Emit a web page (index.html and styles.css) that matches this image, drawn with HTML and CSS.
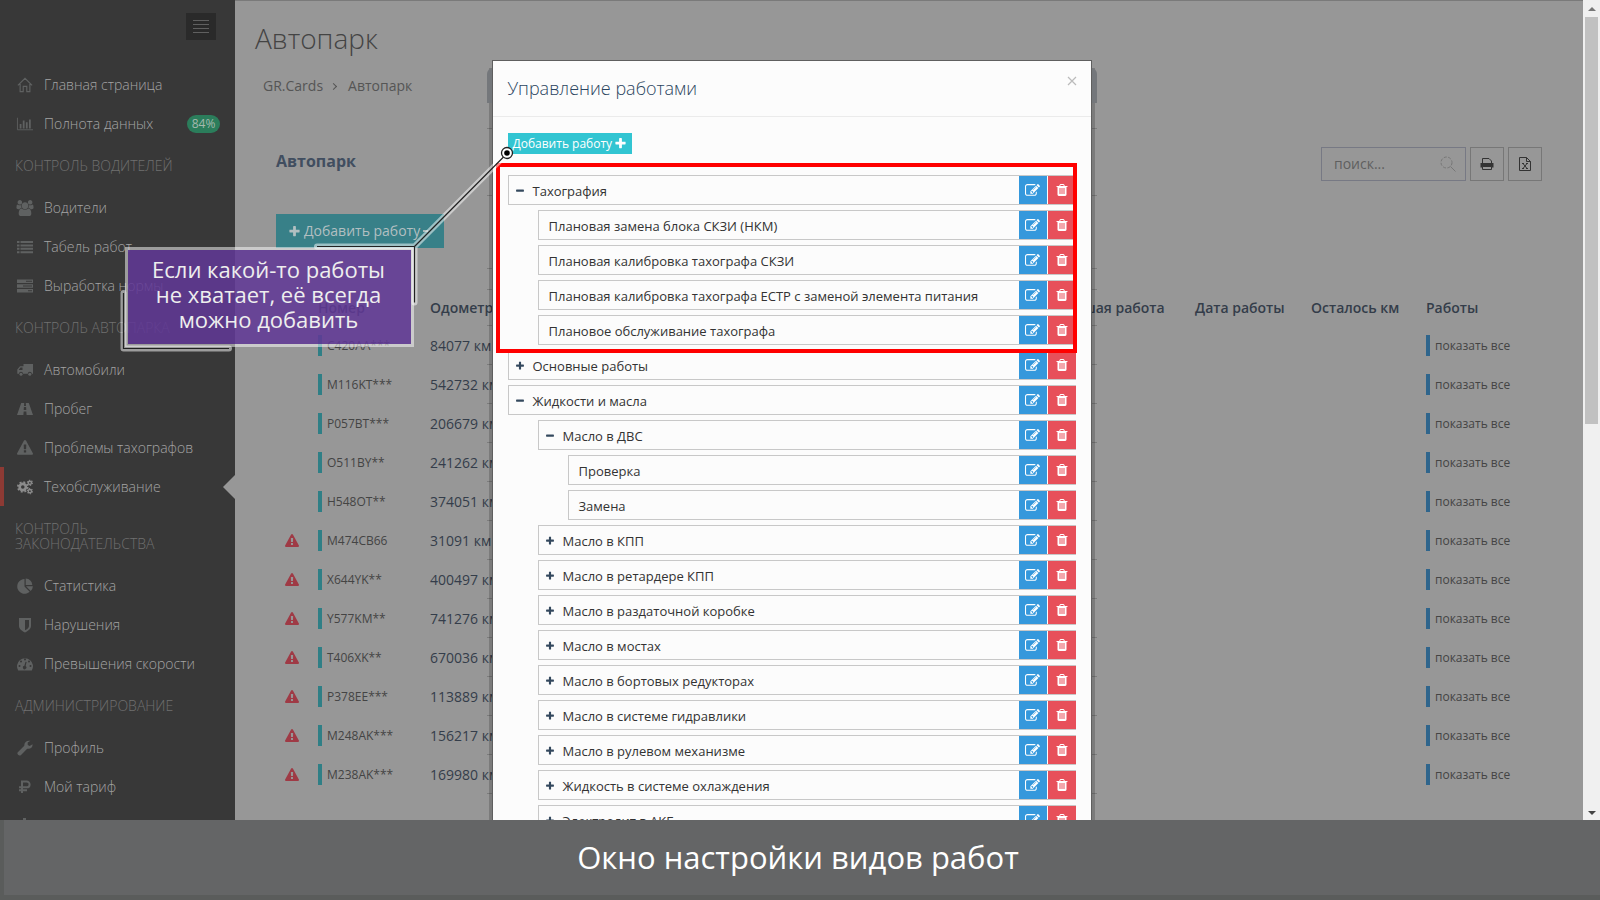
FILE: index.html
```html
<!DOCTYPE html>
<html lang="ru">
<head>
<meta charset="utf-8">
<title>Автопарк</title>
<link rel="stylesheet" href="styles.css">
</head>
<body>
<svg class="sprite" aria-hidden="true">
  <symbol id="i-home" viewBox="0 0 18 18"><path d="M1 9.500 9 1.500l8 8M3.500 8v8.500H7V10.500h4v6h3.500V8" fill="none" stroke="currentColor" stroke-width="1.300"/></symbol>
  <symbol id="i-chart" viewBox="0 0 18 18"><path d="M.5 2v13.500H18" fill="none" stroke="currentColor"/><path d="M3 9h2v5H3zM6.500 5h2v9h-2zM10 7h2v7h-2zM13.500 4h2v10h-2z" fill="currentColor"/></symbol>
  <symbol id="i-users" viewBox="0 0 1920 1792"><path fill="currentColor" d="M593 896q-162 5-265 128H194q-82 0-138-40.500T0 865q0-353 124-353 6 0 43.500 21t97.500 42.500T384 597q67 0 133-23-5 37-5 66 0 139 81 256zm1071 637q0 120-73 189.500t-194 69.500H523q-121 0-194-69.500T256 1533q0-53 3.500-103.500t14-109T300 1212t43-97.500 62-81 85.500-53.500T602 960q10 0 43 21.500t73 48 107 48 135 21.500 135-21.500 107-48 73-48 43-21.500q61 0 111.500 20t85.500 53.500 62 81 43 97.500 26.500 108.500 14 109 3.500 103.500zM640 256q0 106-75 181t-181 75-181-75-75-181 75-181T384 0t181 75 75 181zm704 384q0 159-112.500 271.500T960 1024 688.500 911.500 576 640t112.500-271.500T960 256t271.500 112.500T1344 640zm576 225q0 78-56 118.500t-138 40.500h-134q-103-123-265-128 81-117 81-256 0-29-5-66 66 23 133 23 59 0 119-21.500t97.500-42.500 43.500-21q124 0 124 353zm-128-609q0 106-75 181t-181 75-181-75-75-181 75-181 181-75 181 75 75 181z"/></symbol>
  <symbol id="i-list" viewBox="0 0 16 16"><path fill="currentColor" d="M0 2h2.500v2H0zM3.500 2H16v2H3.500zM0 5.400h2.500v2H0zM3.500 5.400H16v2H3.500zM0 8.800h2.500v2H0zM3.500 8.800H16v2H3.500zM0 12.200h2.500v2H0zM3.500 12.200H16v2H3.500z"/></symbol>
  <symbol id="i-tasks" viewBox="0 0 16 16"><path fill="currentColor" fill-rule="evenodd" d="M0 1.500h16V5H0zM9 2.700v1h6v-1zM0 6.300h16v3.500H0zM6 7.500v1h9v-1zM0 11.100h16v3.500H0zM11 12.300v1h4v-1z"/></symbol>
  <symbol id="i-truck" viewBox="0 0 16 16"><path fill="currentColor" fill-rule="evenodd" d="M6.500 2H16v9.700h-1.200a2 2 0 0 0-4 0H6a2 2 0 0 0-4 0H.3V7.500L3 4.200h3.500zM5.500 5.500h-2L1.600 8h3.900z"/><circle cx="4" cy="12.200" r="1.500" fill="currentColor"/><circle cx="12.800" cy="12.200" r="1.500" fill="currentColor"/></symbol>
  <symbol id="i-road" viewBox="0 0 16 16"><path fill="currentColor" fill-rule="evenodd" d="M4.200 2h3L7 5h2l-.2-3h3L16 14H9.600l-.3-3.500H6.700L6.400 14H0zM6.900 6l-.2 3h2.600l-.2-3z"/></symbol>
  <symbol id="i-warn" viewBox="0 0 1792 1792"><path fill="currentColor" d="M1024 1375v-190q0-14-9.500-23.500T992 1152H800q-13 0-22.500 9.500T768 1185v190q0 14 9.500 23.500T800 1408h192q13 0 22.500-9.500T1024 1375zm-2-374l18-459q0-12-10-19-13-11-24-11H786q-11 0-24 11-10 7-10 21l17 457q0 10 10 16.500t24 6.500h185q14 0 23.500-6.500T1022 1001zm-14-934l768 1408q35 63-2 126-17 29-46.500 46t-63.500 17H128q-34 0-63.500-17T18 1601q-37-63-2-126L784 67q17-31 47-49t65-18 65 18 47 49z"/></symbol>
  <symbol id="i-cogs" viewBox="0 0 18 18"><g fill="none" stroke="currentColor"><circle cx="6.500" cy="9" r="3.500" stroke-width="3"/><circle cx="6.500" cy="9" r="5.500" stroke-width="2" stroke-dasharray="2.160 2.160"/><circle cx="14.500" cy="4.300" r="1.800" stroke-width="1.600"/><circle cx="14.500" cy="4.300" r="2.900" stroke-width="1.200" stroke-dasharray="1.500 1.540"/><circle cx="14.500" cy="13.700" r="1.800" stroke-width="1.600"/><circle cx="14.500" cy="13.700" r="2.900" stroke-width="1.200" stroke-dasharray="1.500 1.540"/></g></symbol>
  <symbol id="i-pie" viewBox="0 0 16 16"><path fill="currentColor" d="M7.500 1v7.500l5.200 5.300A7.400 7.400 0 1 1 7.500 1zM8.700.5A7.300 7.300 0 0 1 15.300 7H8.700zM9 8.200h6.900a7 7 0 0 1-2.200 4.800z"/></symbol>
  <symbol id="i-shield" viewBox="0 0 16 16"><path fill="currentColor" fill-rule="evenodd" d="M2 1h12v8c0 3-3 5-6 6.500C5 14 2 12 2 9zM8 3v10.300c2-1 4-2.500 4-4.300V3z"/></symbol>
  <symbol id="i-tach" viewBox="0 0 16 16"><path fill="currentColor" fill-rule="evenodd" d="M1.200 14.500A8 8 0 1 1 14.800 14.500zM7 3.500a1 1 0 1 0 2 0 1 1 0 1 0-2 0M3 5.500a1 1 0 1 0 2 0 1 1 0 1 0-2 0M11 5.500a1 1 0 1 0 2 0 1 1 0 1 0-2 0M1.500 10a1 1 0 1 0 2 0 1 1 0 1 0-2 0M12.500 10a1 1 0 1 0 2 0 1 1 0 1 0-2 0M8.500 5.800l-1.100 4a1.700 1.700 0 1 0 1.200.3l1-4z"/></symbol>
  <symbol id="i-wrench" viewBox="0 0 16 16"><path fill="currentColor" d="M15.500 4.200 12.700 6l-2-1V2.500l2.700-1.700C10 0 7 2 7.300 5.700L.8 12.200c-1.500 1.700 1.200 4.400 3 3l6.400-6.500c3.300.7 5.800-1.500 5.300-4.500z"/></symbol>
  <symbol id="i-rub" viewBox="0 0 16 16"><path fill="none" stroke="currentColor" stroke-width="2" d="M5 14V2.500h4.700a2.900 2.900 0 0 1 0 5.800H2M2 11.300h8"/></symbol>
  <symbol id="i-user" viewBox="0 0 16 16"><path fill="currentColor" d="M6 0h3v11H6z"/></symbol>
  <symbol id="i-plus" viewBox="0 0 1792 1792"><path fill="currentColor" d="M1600 736v192q0 40-28 68t-68 28h-416v416q0 40-28 68t-68 28H800q-40 0-68-28t-28-68v-416H288q-40 0-68-28t-28-68V736q0-40 28-68t68-28h416V224q0-40 28-68t68-28h192q40 0 68 28t28 68v416h416q40 0 68 28t28 68z"/></symbol>
  <symbol id="i-minus" viewBox="0 0 1792 1792"><path fill="currentColor" d="M1600 736v192q0 40-28 68t-68 28H288q-40 0-68-28t-28-68V736q0-40 28-68t68-28h1216q40 0 68 28t28 68z"/></symbol>
  <symbol id="i-edit" viewBox="0 0 1792 1792"><path fill="currentColor" d="M888 1184l116-116-152-152-116 116v56h96v96h56zm440-720q-16-16-33 1L945 815q-17 17-1 33t33-1l350-350q17-17 1-33zm80 594v190q0 119-84.500 203.500T1120 1536H288q-119 0-203.500-84.500T0 1248V416q0-119 84.500-203.500T288 128h832q63 0 117 25 15 7 18 23 3 17-9 29l-49 49q-14 14-32 8-23-6-45-6H288q-66 0-113 47t-47 113v832q0 66 47 113t113 47h832q66 0 113-47t47-113v-126q0-13 9-22l64-64q15-15 35-7t20 29zm-96-738l288 288-672 672H640V992zm444 132l-92 92-288-288 92-92q28-28 68-28t68 28l152 152q28 28 28 68t-28 68z"/></symbol>
  <symbol id="i-trash" viewBox="0 0 1792 1792"><path fill="currentColor" d="M704 1376V672q0-14-9-23t-23-9h-64q-14 0-23 9t-9 23v704q0 14 9 23t23 9h64q14 0 23-9t9-23zm256 0V672q0-14-9-23t-23-9h-64q-14 0-23 9t-9 23v704q0 14 9 23t23 9h64q14 0 23-9t9-23zm256 0V672q0-14-9-23t-23-9h-64q-14 0-23 9t-9 23v704q0 14 9 23t23 9h64q14 0 23-9t9-23zM672 384h448l-48-117q-7-9-17-11H738q-10 2-17 11zm928 32v64q0 14-9 23t-23 9h-96v948q0 83-47 143.500t-113 60.500H480q-66 0-113-58.500T320 1464V512h-96q-14 0-23-9t-9-23v-64q0-14 9-23t23-9h309l70-167q15-37 54-63t79-26h320q40 0 79 26t54 63l70 167h309q14 0 23 9t9 23z"/></symbol>
  <symbol id="i-print" viewBox="0 0 14 14"><path fill="currentColor" d="M.5 6h13v4.500h-13z"/><path fill="none" stroke="currentColor" d="M2.500 6.500v-5h6.500l2.500 2.500v2.500"/><path fill="#979797" stroke="currentColor" d="M2.500 9.500h9v3h-9z"/></symbol>
  <symbol id="i-excel" viewBox="0 0 14 16"><path fill="none" stroke="currentColor" d="M1.500 1.500h7l4 4v9h-11zM8.500 1.500v4h4M5 7.500l4 5M9 7.500l-4 5M4 7.500h2M8 7.500h2M4 12.500h2M8 12.500h2"/></symbol>
  <symbol id="i-search" viewBox="0 0 18 18"><circle cx="7.500" cy="7.500" r="5.500" fill="none" stroke="currentColor" stroke-dasharray="3 1.500"/><path d="m11.500 11.500 5 5" stroke="currentColor"/></symbol>
</svg>

<div class="stage">
  <nav class="sidebar">
    <div class="sidebar-top"><button class="toggler" type="button" aria-label="Меню"><span></span><span></span><span></span><span></span></button></div>
    <a class="item" href="#"><svg><use href="#i-home"/></svg>Главная страница</a>
    <a class="item" href="#"><svg><use href="#i-chart"/></svg>Полнота данных<span class="badge">84%</span></a>
    <h3>КОНТРОЛЬ ВОДИТЕЛЕЙ</h3>
    <a class="item" href="#"><svg><use href="#i-users"/></svg>Водители</a>
    <a class="item" href="#"><svg><use href="#i-list"/></svg>Табель работ</a>
    <a class="item" href="#"><svg><use href="#i-tasks"/></svg>Выработка нормы</a>
    <h3>КОНТРОЛЬ АВТОПАРКА</h3>
    <a class="item" href="#"><svg><use href="#i-truck"/></svg>Автомобили</a>
    <a class="item" href="#"><svg><use href="#i-road"/></svg>Пробег</a>
    <a class="item" href="#"><svg><use href="#i-warn"/></svg>Проблемы тахографов</a>
    <a class="item active" href="#"><svg><use href="#i-cogs"/></svg>Техобслуживание</a>
    <h3>КОНТРОЛЬ ЗАКОНОДАТЕЛЬСТВА</h3>
    <a class="item" href="#"><svg><use href="#i-pie"/></svg>Статистика</a>
    <a class="item" href="#"><svg><use href="#i-shield"/></svg>Нарушения</a>
    <a class="item" href="#"><svg><use href="#i-tach"/></svg>Превышения скорости</a>
    <h3>АДМИНИСТРИРОВАНИЕ</h3>
    <a class="item" href="#"><svg><use href="#i-wrench"/></svg>Профиль</a>
    <a class="item" href="#"><svg><use href="#i-rub"/></svg>Мой тариф</a>
    <a class="item" href="#" aria-label="Пользователи"><svg><use href="#i-user"/></svg></a>
  </nav>

  <main class="page">
    <h1>Автопарк</h1>
    <div class="crumbs"><a href="#">GR.Cards</a><span class="sep"></span><a href="#">Автопарк</a></div>
    <section class="panel">
      <div class="panel-head">
        <h2>Автопарк</h2>
        <div class="tools">
          <label class="search"><input type="text" placeholder="поиск..." aria-label="Поиск"><svg><use href="#i-search"/></svg></label>
          <button type="button" class="tool" aria-label="Печать"><svg><use href="#i-print"/></svg></button>
          <button type="button" class="tool" aria-label="Excel"><svg><use href="#i-excel"/></svg></button>
        </div>
      </div>
      <button type="button" class="add-main"><svg><use href="#i-plus"/></svg>Добавить работу<i class="caret"></i></button>
      <table class="fleet">
        <colgroup><col class="c-warn"><col class="c-num"><col class="c-odo"><col><col class="c-next"><col class="c-date"><col class="c-left"><col class="c-works"></colgroup>
        <thead><tr><th></th><th>Номер</th><th>Одометр</th><th></th><th>Ближайшая работа</th><th>Дата работы</th><th>Осталось км</th><th>Работы</th></tr></thead>
        <tbody>
          <tr><td></td><td><a class="plate" href="#">C420AA***</a></td><td>84077 км</td><td colspan="4"></td><td><a class="plate blue" href="#">показать все</a></td></tr>
          <tr><td></td><td><a class="plate" href="#">M116KT***</a></td><td>542732 км</td><td colspan="4"></td><td><a class="plate blue" href="#">показать все</a></td></tr>
          <tr><td></td><td><a class="plate" href="#">P057BT***</a></td><td>206679 км</td><td colspan="4"></td><td><a class="plate blue" href="#">показать все</a></td></tr>
          <tr><td></td><td><a class="plate" href="#">O511BY**</a></td><td>241262 км</td><td colspan="4"></td><td><a class="plate blue" href="#">показать все</a></td></tr>
          <tr><td></td><td><a class="plate" href="#">H548OT**</a></td><td>374051 км</td><td colspan="4"></td><td><a class="plate blue" href="#">показать все</a></td></tr>
          <tr><td><svg><use href="#i-warn"/></svg></td><td><a class="plate" href="#">M474CB66</a></td><td>31091 км</td><td colspan="4"></td><td><a class="plate blue" href="#">показать все</a></td></tr>
          <tr><td><svg><use href="#i-warn"/></svg></td><td><a class="plate" href="#">X644YK**</a></td><td>400497 км</td><td colspan="4"></td><td><a class="plate blue" href="#">показать все</a></td></tr>
          <tr><td><svg><use href="#i-warn"/></svg></td><td><a class="plate" href="#">Y577KM**</a></td><td>741276 км</td><td colspan="4"></td><td><a class="plate blue" href="#">показать все</a></td></tr>
          <tr><td><svg><use href="#i-warn"/></svg></td><td><a class="plate" href="#">T406XK**</a></td><td>670036 км</td><td colspan="4"></td><td><a class="plate blue" href="#">показать все</a></td></tr>
          <tr><td><svg><use href="#i-warn"/></svg></td><td><a class="plate" href="#">P378EE***</a></td><td>113889 км</td><td colspan="4"></td><td><a class="plate blue" href="#">показать все</a></td></tr>
          <tr><td><svg><use href="#i-warn"/></svg></td><td><a class="plate" href="#">M248AK***</a></td><td>156217 км</td><td colspan="4"></td><td><a class="plate blue" href="#">показать все</a></td></tr>
          <tr><td><svg><use href="#i-warn"/></svg></td><td><a class="plate" href="#">M238AK***</a></td><td>169980 км</td><td colspan="4"></td><td><a class="plate blue" href="#">показать все</a></td></tr>
        </tbody>
      </table>
    </section>
  </main>

  <div class="scrollbar"><i class="up"></i><div class="thumb"></div><i class="down"></i></div>

  <div class="overlay">
    <div class="modal-wrap">
      <div class="ticks"></div>
      <div class="shoulder"></div>
      <div class="modal" role="dialog" aria-labelledby="dlg">
        <header><h2 id="dlg">Управление работами</h2><button type="button" class="close" aria-label="Закрыть"><svg viewBox="0 0 10 10"><path d="m1 1 8 8M9 1 1 9" stroke="currentColor" stroke-width="1.200"/></svg></button></header>
        <div class="modal-body">
          <button type="button" class="add">Добавить работу<svg><use href="#i-plus"/></svg></button>
          <ul class="tree">
            <li><div class="row"><button class="tg" type="button" aria-label="Свернуть"><svg><use href="#i-minus"/></svg></button><span>Тахография</span><button class="ed" type="button" aria-label="Изменить"><svg><use href="#i-edit"/></svg></button><button class="rm" type="button" aria-label="Удалить"><svg><use href="#i-trash"/></svg></button></div>
              <ul>
                <li><div class="row leaf"><span>Плановая замена блока СКЗИ (НКМ)</span><button class="ed" type="button" aria-label="Изменить"><svg><use href="#i-edit"/></svg></button><button class="rm" type="button" aria-label="Удалить"><svg><use href="#i-trash"/></svg></button></div></li>
                <li><div class="row leaf"><span>Плановая калибровка тахографа СКЗИ</span><button class="ed" type="button" aria-label="Изменить"><svg><use href="#i-edit"/></svg></button><button class="rm" type="button" aria-label="Удалить"><svg><use href="#i-trash"/></svg></button></div></li>
                <li><div class="row leaf"><span>Плановая калибровка тахографа ЕСТР с заменой элемента питания</span><button class="ed" type="button" aria-label="Изменить"><svg><use href="#i-edit"/></svg></button><button class="rm" type="button" aria-label="Удалить"><svg><use href="#i-trash"/></svg></button></div></li>
                <li><div class="row leaf"><span>Плановое обслуживание тахографа</span><button class="ed" type="button" aria-label="Изменить"><svg><use href="#i-edit"/></svg></button><button class="rm" type="button" aria-label="Удалить"><svg><use href="#i-trash"/></svg></button></div></li>
              </ul>
            </li>
            <li><div class="row"><button class="tg" type="button" aria-label="Развернуть"><svg><use href="#i-plus"/></svg></button><span>Основные работы</span><button class="ed" type="button" aria-label="Изменить"><svg><use href="#i-edit"/></svg></button><button class="rm" type="button" aria-label="Удалить"><svg><use href="#i-trash"/></svg></button></div></li>
            <li><div class="row"><button class="tg" type="button" aria-label="Свернуть"><svg><use href="#i-minus"/></svg></button><span>Жидкости и масла</span><button class="ed" type="button" aria-label="Изменить"><svg><use href="#i-edit"/></svg></button><button class="rm" type="button" aria-label="Удалить"><svg><use href="#i-trash"/></svg></button></div>
              <ul>
                <li><div class="row"><button class="tg" type="button" aria-label="Свернуть"><svg><use href="#i-minus"/></svg></button><span>Масло в ДВС</span><button class="ed" type="button" aria-label="Изменить"><svg><use href="#i-edit"/></svg></button><button class="rm" type="button" aria-label="Удалить"><svg><use href="#i-trash"/></svg></button></div>
                  <ul>
                    <li><div class="row leaf"><span>Проверка</span><button class="ed" type="button" aria-label="Изменить"><svg><use href="#i-edit"/></svg></button><button class="rm" type="button" aria-label="Удалить"><svg><use href="#i-trash"/></svg></button></div></li>
                    <li><div class="row leaf"><span>Замена</span><button class="ed" type="button" aria-label="Изменить"><svg><use href="#i-edit"/></svg></button><button class="rm" type="button" aria-label="Удалить"><svg><use href="#i-trash"/></svg></button></div></li>
                  </ul>
                </li>
                <li><div class="row"><button class="tg" type="button" aria-label="Развернуть"><svg><use href="#i-plus"/></svg></button><span>Масло в КПП</span><button class="ed" type="button" aria-label="Изменить"><svg><use href="#i-edit"/></svg></button><button class="rm" type="button" aria-label="Удалить"><svg><use href="#i-trash"/></svg></button></div></li>
                <li><div class="row"><button class="tg" type="button" aria-label="Развернуть"><svg><use href="#i-plus"/></svg></button><span>Масло в ретардере КПП</span><button class="ed" type="button" aria-label="Изменить"><svg><use href="#i-edit"/></svg></button><button class="rm" type="button" aria-label="Удалить"><svg><use href="#i-trash"/></svg></button></div></li>
                <li><div class="row"><button class="tg" type="button" aria-label="Развернуть"><svg><use href="#i-plus"/></svg></button><span>Масло в раздаточной коробке</span><button class="ed" type="button" aria-label="Изменить"><svg><use href="#i-edit"/></svg></button><button class="rm" type="button" aria-label="Удалить"><svg><use href="#i-trash"/></svg></button></div></li>
                <li><div class="row"><button class="tg" type="button" aria-label="Развернуть"><svg><use href="#i-plus"/></svg></button><span>Масло в мостах</span><button class="ed" type="button" aria-label="Изменить"><svg><use href="#i-edit"/></svg></button><button class="rm" type="button" aria-label="Удалить"><svg><use href="#i-trash"/></svg></button></div></li>
                <li><div class="row"><button class="tg" type="button" aria-label="Развернуть"><svg><use href="#i-plus"/></svg></button><span>Масло в бортовых редукторах</span><button class="ed" type="button" aria-label="Изменить"><svg><use href="#i-edit"/></svg></button><button class="rm" type="button" aria-label="Удалить"><svg><use href="#i-trash"/></svg></button></div></li>
                <li><div class="row"><button class="tg" type="button" aria-label="Развернуть"><svg><use href="#i-plus"/></svg></button><span>Масло в системе гидравлики</span><button class="ed" type="button" aria-label="Изменить"><svg><use href="#i-edit"/></svg></button><button class="rm" type="button" aria-label="Удалить"><svg><use href="#i-trash"/></svg></button></div></li>
                <li><div class="row"><button class="tg" type="button" aria-label="Развернуть"><svg><use href="#i-plus"/></svg></button><span>Масло в рулевом механизме</span><button class="ed" type="button" aria-label="Изменить"><svg><use href="#i-edit"/></svg></button><button class="rm" type="button" aria-label="Удалить"><svg><use href="#i-trash"/></svg></button></div></li>
                <li><div class="row"><button class="tg" type="button" aria-label="Развернуть"><svg><use href="#i-plus"/></svg></button><span>Жидкость в системе охлаждения</span><button class="ed" type="button" aria-label="Изменить"><svg><use href="#i-edit"/></svg></button><button class="rm" type="button" aria-label="Удалить"><svg><use href="#i-trash"/></svg></button></div></li>
                <li><div class="row"><button class="tg" type="button" aria-label="Развернуть"><svg><use href="#i-plus"/></svg></button><span>Электролит в АКБ</span><button class="ed" type="button" aria-label="Изменить"><svg><use href="#i-edit"/></svg></button><button class="rm" type="button" aria-label="Удалить"><svg><use href="#i-trash"/></svg></button></div></li>
              </ul>
            </li>
          </ul>
        </div>
      </div>
      <div class="frame"></div>
    </div>
  </div>

  <div class="callout">Если какой-то работы<br>не хватает, её всегда<br>можно добавить</div>
  <svg class="pointer" viewBox="0 0 400 210" aria-hidden="true">
    <g fill="none" stroke="#fff" stroke-opacity=".5" stroke-width="6" stroke-linecap="round" stroke-linejoin="round"><path d="M199 104.500h97.500v56M296.500 104.500 389 11.500M5.500 151v55.500H111"/></g>
    <path fill="none" stroke="#222" stroke-width="1.200" d="M199 104.500h97.500v56M296.500 104.500 389 11.500M5.500 151v55.500H111"/>
    <circle cx="389" cy="11" r="5.500" fill="#fff" stroke="#222" stroke-width="1.300"/><circle cx="389" cy="11" r="2.800" fill="#000"/>
  </svg>
</div>
<footer class="caption">Окно настройки видов работ</footer>
</body>
</html>
```
FILE: styles.css
```css
* { box-sizing: border-box; }
body { margin: 0; height: 100vh; display: flex; flex-direction: column; overflow: hidden; font: 14px/20px "Open Sans", "Noto Sans", sans-serif; background: #979797; }
button, input { font: inherit; }
button { padding: 0; border: 0; cursor: pointer; }
a { color: inherit; text-decoration: none; }
h1, h2, h3, ul { margin: 0; padding: 0; }
ul { list-style: none; }
.sprite { position: absolute; width: 0; height: 0; }

.stage { position: relative; flex: 1; min-height: 0; display: flex; overflow: hidden; }

/* sidebar */
.sidebar { flex: 0 0 235px; overflow: hidden; background: #383838; color: #a4a4a4; font-weight: 300; }
.sidebar-top { height: 65px; padding: 13px 19px 0; display: flex; justify-content: flex-end; align-items: flex-start; }
.toggler { width: 30px; height: 27px; padding: 7px; display: flex; flex-direction: column; gap: 3px; background: #2a2a2a; }
.toggler span { width: 16px; height: 1px; background: #606060; }
.item { position: relative; height: 39px; padding: 0 15px 0 16px; display: flex; align-items: center; gap: 10px; }
.item svg { width: 18px; height: 16px; color: #5f6161; }
.badge { margin-left: auto; width: 33px; height: 18px; border-radius: 9px; background: #2b7d5b; color: #a5b8ae; font-size: 12px; line-height: 18px; font-weight: 400; text-align: center; }
.sidebar h3 { padding: 15px; font-size: 14px; line-height: 15px; font-weight: 300; color: #707070; }
.item.active { border-left: 4px solid #8d3a34; padding-left: 12px; }
.item.active svg { color: #8b8b8b; }
.item.active::after { content: ""; position: absolute; right: 0; top: 8px; border: 12px solid transparent; border-left: 0; border-right-color: #979797; }

/* page under the dialog */
.page { flex: 1; min-width: 0; padding: 18px 41px 0; border-top: 1px solid #7a7a7a; background: #979797; color: #343d4a; }
.page h1 { margin-left: -21px; font-size: 28px; line-height: 38px; font-weight: 300; color: #444; }
.crumbs { margin: 19px 0 0 -13px; display: flex; align-items: center; color: #555; }
.sep { width: 5px; height: 5px; margin: 0 12px 0 8px; border: solid #555; border-width: 1px 1px 0 0; transform: rotate(45deg); }
.panel-head { margin-top: 51px; display: flex; justify-content: space-between; }
.panel h2 { font-size: 16px; line-height: 28px; font-weight: 700; color: #414e60; }
.tools { display: flex; gap: 4px; }
.search { display: flex; width: 145px; height: 34px; padding: 0 8px 0 12px; align-items: center; border: 1px solid #777984; }
.search input { flex: 1; min-width: 0; padding: 0; border: 0; outline: 0; background: none; }
.search input::placeholder { color: #5f5f5f; opacity: 1; }
.search svg { width: 18px; height: 18px; color: #777; }
.tool { width: 34px; height: 34px; display: grid; place-items: center; border: 1px solid #777; background: none; color: #333; }
.tool svg { width: 14px; height: 16px; }
.add-main { margin-top: 33px; width: 168px; height: 34px; padding: 0 12px; display: flex; align-items: center; gap: 3px; background: #388088; color: #b2bfc1; font-weight: 400; }
.add-main svg { width: 13px; height: 13px; }
.caret { width: 5px; height: 2px; background: #a9b9bb; }
.fleet { margin-top: 42px; width: 100%; table-layout: fixed; border-collapse: collapse; }
.c-warn { width: 34px; } .c-num { width: 112px; } .c-odo { width: 110px; }
.c-next { width: 168px; } .c-date { width: 116px; } .c-left { width: 115px; } .c-works { width: 124px; }
.fleet th { height: 36px; padding: 0 8px; text-align: left; font-weight: 600; white-space: nowrap; }
.fleet td { height: 39px; padding: 0 8px; white-space: nowrap; }
.fleet td:first-child { padding: 0 0 0 9px; }
.fleet td svg { display: block; width: 14px; height: 14px; color: #9f3a45; }
.plate { display: block; height: 21px; border-left: 4px solid #2f7f86; border-radius: 0 2px 2px 0; padding-left: 5px; font-size: 12px; line-height: 22px; color: #444; }
.plate.blue { border-left-color: #2f658c; }

.scrollbar { flex: 0 0 17px; padding: 3px 2px 5px; display: flex; flex-direction: column; align-items: center; background: #f0f0f0; }
.thumb { width: 13px; height: 407px; background: #c1c1c1; margin-top: 6px; }
.up { border: 4px solid transparent; border-top: 0; border-bottom-color: #777; margin-top: 4px; }
.down { border: 4px solid transparent; border-bottom: 0; border-top-color: #444; margin-top: auto; }

/* dialog */
.overlay { position: absolute; inset: 61px 17px 0 0; display: flex; justify-content: center; }
.modal-wrap { position: relative; width: 598px; }
.ticks { position: absolute; inset: 67px -6px 0; background:
  linear-gradient(#7c7c7c, #7c7c7c) 0 0 / 100% 1px no-repeat,
  linear-gradient(#7c7c7c, #7c7c7c) 0 67px / 100% 1px no-repeat,
  linear-gradient(#7c7c7c, #7c7c7c) 0 140px / 100% 1px no-repeat,
  linear-gradient(#7c7c7c, #7c7c7c) 0 161px / 100% 1px no-repeat,
  repeating-linear-gradient(#7c7c7c 0 1px, transparent 1px 39px) 0 197px / 100% 100% no-repeat; }
.shoulder { position: absolute; inset: 7px -4px 0; background: rgba(0,0,0,.18); }
.shoulder::before { content: ""; position: absolute; inset: 0 -2px auto; height: 35px; border-radius: 6px 6px 0 0; background: #74777b; }
.modal { position: relative; min-height: 100%; background: #fcfcfc; box-shadow: 0 0 0 1px #5f5f5f; color: #333; }
.modal header { height: 56px; padding: 15px 14px 0 15px; display: flex; justify-content: space-between; align-items: flex-start; border-bottom: 1px solid #ebebeb; }
.modal h2 { font-size: 18px; line-height: 25px; font-weight: 300; color: #2b4560; }
.close { width: 10px; height: 10px; background: none; color: #bbb; }
.close svg { display: block; }
.modal-body { padding: 16px 15px 0; }
.add { height: 21px; padding: 0 5px; display: flex; align-items: center; gap: 2px; background: #32c5d2; color: #fff; font-size: 12px; font-weight: 400; }
.add svg { width: 13px; height: 13px; }
.tree { margin-top: 21px; }
.tree ul { padding-left: 30px; }
.row { height: 30px; margin-bottom: 5px; padding-left: 6px; display: flex; gap: 1px; border: solid #c8c8c8; border-width: 1px 0 1px 1px; font-size: 13px; line-height: 30px; }
.row.leaf { padding-left: 10px; }
.row span { flex: 1; white-space: nowrap; }
.tg { width: 17px; padding-top: 2px; display: flex; align-items: center; background: none; color: #34495e; }
.tg svg { width: 10px; height: 10px; }
.ed, .rm { width: 28px; display: grid; place-items: center; color: #fff; background: #3598dc; }
.rm { background: #e7505a; }
.ed svg, .rm svg { width: 14px; height: 14px; }
.ed svg { width: 15px; height: 15px; }
.frame { position: absolute; inset: 102px 14px auto 3px; height: 190px; border: 4px solid #f00; }

/* annotation */
.callout { position: absolute; left: 125px; top: 247px; width: 289px; padding: 7px 2px 12px 0; border: 3px solid rgba(255,255,255,.5); background: rgba(97,56,150,.86); background-clip: padding-box; color: #eee; font-size: 22px; line-height: 25px; text-align: center; }
.pointer { position: absolute; left: 118px; top: 142px; width: 400px; height: 210px; }
.caption { flex: 0 0 80px; padding: 15px 8px 0 0; border: solid #5a5c5b; border-width: 0 0 5px 4px; background: #646566; color: #fff; font-size: 31px; line-height: 44px; text-align: center; }
```
